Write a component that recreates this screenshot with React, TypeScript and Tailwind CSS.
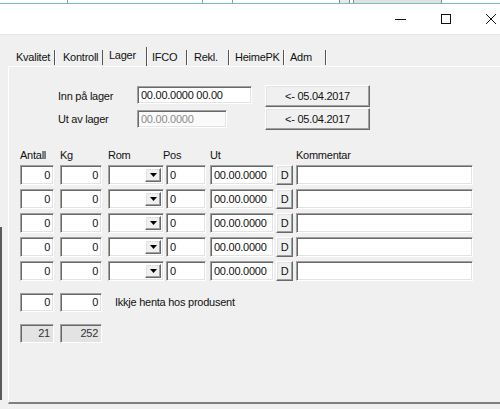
import type { ReactNode } from "react"

const sunken =
  "border border-t-[#a0a0a0] border-l-[#a0a0a0] border-r-white border-b-white shadow-[inset_1px_1px_0_#696969,inset_-1px_-1px_0_#e3e3e3]"
const raised =
  "border border-t-white border-l-white border-r-[#696969] border-b-[#696969] shadow-[inset_-1px_-1px_0_#a0a0a0,inset_1px_1px_0_#e3e3e3]"

function Field({ className = "", children }: { className?: string; children?: ReactNode }) {
  return (
    <div className={`${sunken} flex items-center px-[3px] leading-[13px] whitespace-nowrap overflow-hidden ${className}`}>
      {children}
    </div>
  )
}

function Btn({ className = "", children }: { className?: string; children?: ReactNode }) {
  return (
    <div className={`${raised} bg-[#f0f0f0] flex items-center justify-center leading-[13px] ${className}`}>
      {children}
    </div>
  )
}

function Combo() {
  return (
    <div className={`${sunken} bg-white w-[56px] h-[20px] ml-[6px] flex justify-end p-[2px]`}>
      <div className={`${raised} bg-[#f0f0f0] w-[16px] h-full flex items-center justify-center`}>
        <svg width="7" height="4" viewBox="0 0 7 4">
          <polygon points="0,0 7,0 3.5,4" fill="#000" />
        </svg>
      </div>
    </div>
  )
}

function Row() {
  return (
    <div className="flex h-[20px] items-stretch">
      <Field className="w-[34px] ml-[11px] justify-end bg-white">0</Field>
      <Field className="w-[42px] ml-[6px] justify-end bg-white">0</Field>
      <Combo />
      <Field className="w-[40px] ml-[2px] bg-white">0</Field>
      <Field className="w-[64px] ml-[4px] bg-white">00.00.0000</Field>
      <Btn className="w-[17px] ml-[2px]">D</Btn>
      <Field className="w-[177px] ml-[3px] bg-white" />
    </div>
  )
}

const tabs = [
  { name: "Kvalitet", w: "w-[43px]", pl: "pl-[4px]" },
  { name: "Kontroll", w: "w-[48px]", pl: "pl-[8px]" },
  { name: "Lager", w: "w-[44px]", pl: "pl-[6px]", active: true },
  { name: "IFCO", w: "w-[40px]", pl: "pl-[5px]" },
  { name: "Rekl.", w: "w-[42px]", pl: "pl-[7px]" },
  { name: "HeimePK", w: "w-[55px]", pl: "pl-[6px]" },
  { name: "Adm", w: "w-[42px]", pl: "pl-[6px]" },
]

export default function App() {
  return (
    <div className="w-[500px] h-[409px] overflow-hidden bg-[#f0f0f0] text-[11px] tracking-[-0.25px] text-[#111] font-['Liberation_Sans',Arial,sans-serif]">
      {/* edge of the window behind */}
      <div className="h-[4px] bg-white border-b border-[#6fc4b6] flex">
        <div className="w-[68px] border-r border-[#999]" />
        <div className="w-[135px] border-r border-[#999]" />
        <div className="w-[30px] border-r border-[#999]" />
        <div className="w-[106px]" />
        <div className="w-[11px] border-x border-[#888] bg-[#e8e8e8]" />
        <div className="ml-[3px] w-[89px] border-x border-[#888] bg-[#e1e1e1]" />
      </div>

      {/* title bar */}
      <div className="h-[31px] bg-white border-b border-[#e6e6e6] flex items-center">
        <div className="ml-[378px] flex shrink-0">
          <div className="w-[45px] h-[30px] flex items-center justify-center">
            <svg width="11" height="1" viewBox="0 0 11 1">
              <rect width="11" height="1" fill="#111" />
            </svg>
          </div>
          <div className="w-[45px] h-[30px] flex items-center justify-center">
            <svg width="10" height="10" viewBox="0 0 10 10">
              <rect x="0.5" y="0.5" width="9" height="9" fill="none" stroke="#111" />
            </svg>
          </div>
          <div className="w-[45px] h-[30px] flex items-center justify-center">
            <svg width="10" height="10" viewBox="0 0 10 10">
              <path d="M0 0L10 10M10 0L0 10" stroke="#111" strokeWidth="1" />
            </svg>
          </div>
        </div>
      </div>

      <div className="flex">
        <div className="w-[8px] shrink-0">
          <div className="w-[2px] h-[173px] mt-[192px] bg-[#5a5a5a]" />
        </div>

        <div className="flex-1 flex flex-col">
          {/* tabs */}
          <div className="flex items-end h-[31px] pl-[4px]">
            {tabs.map((t) =>
              t.active ? (
                <div
                  key={t.name}
                  className={`${t.w} ${t.pl} h-[20px] -mb-[1px] bg-[#f0f0f0] border-r border-r-[#555] shadow-[1px_0_0_#fff] flex items-start pt-[2px] leading-[13px]`}
                >
                  {t.name}
                </div>
              ) : (
                <div
                  key={t.name}
                  className={`${t.w} ${t.pl} h-[15px] mb-[1px] border-r border-r-[#555] shadow-[1px_0_0_#fff] flex items-center leading-[13px]`}
                >
                  {t.name}
                </div>
              )
            )}
          </div>

          {/* tab panel */}
          <div className="h-[338px] border-t border-l border-white border-b-2 border-b-[#808080] flex flex-col">
            <div className="mt-[18px] flex">
              <div className="ml-[49px] w-[207px] flex flex-col">
                <div className="h-[23px] flex items-start">
                  <span className="w-[79px] mt-[5px] leading-[13px]">Inn på lager</span>
                  <Field className="w-[115px] h-[18px] mt-[1px] bg-white">00.00.0000 00.00</Field>
                </div>
                <div className="h-[23px] flex items-start">
                  <span className="w-[79px] mt-[5px] leading-[13px]">Ut av lager</span>
                  <Field className="w-[90px] h-[18px] mt-[2px] bg-[#fafafa] text-[#8c8c8c]">00.00.0000</Field>
                </div>
              </div>
              <div className="flex flex-col gap-[1px]">
                <Btn className="w-[105px] h-[22px]">&lt;- 05.04.2017</Btn>
                <Btn className="w-[105px] h-[22px]">&lt;- 05.04.2017</Btn>
              </div>
            </div>

            <div className="mt-[18px] h-[13px] flex leading-[13px] pl-[11px]">
              <span className="w-[40px]">Antall</span>
              <span className="w-[48px]">Kg</span>
              <span className="w-[55px]">Rom</span>
              <span className="w-[47px]">Pos</span>
              <span className="w-[86px]">Ut</span>
              <span>Kommentar</span>
            </div>

            <div className="mt-[3px] flex flex-col gap-[4px]">
              <Row />
              <Row />
              <Row />
              <Row />
              <Row />
            </div>

            <div className="mt-[12px] h-[19px] flex items-stretch">
              <Field className="w-[34px] ml-[11px] justify-end bg-white">0</Field>
              <Field className="w-[42px] ml-[6px] justify-end bg-white">0</Field>
              <span className="ml-[13px] self-center leading-[13px]">Ikkje henta hos produsent</span>
            </div>

            <div className="mt-[12px] h-[19px] flex items-stretch">
              <Field className="w-[34px] ml-[11px] justify-end bg-[#e3e3e3] text-[#333]">21</Field>
              <Field className="w-[42px] ml-[6px] justify-end bg-[#e3e3e3] text-[#333]">252</Field>
            </div>
          </div>
        </div>
      </div>
    </div>
  )
}
